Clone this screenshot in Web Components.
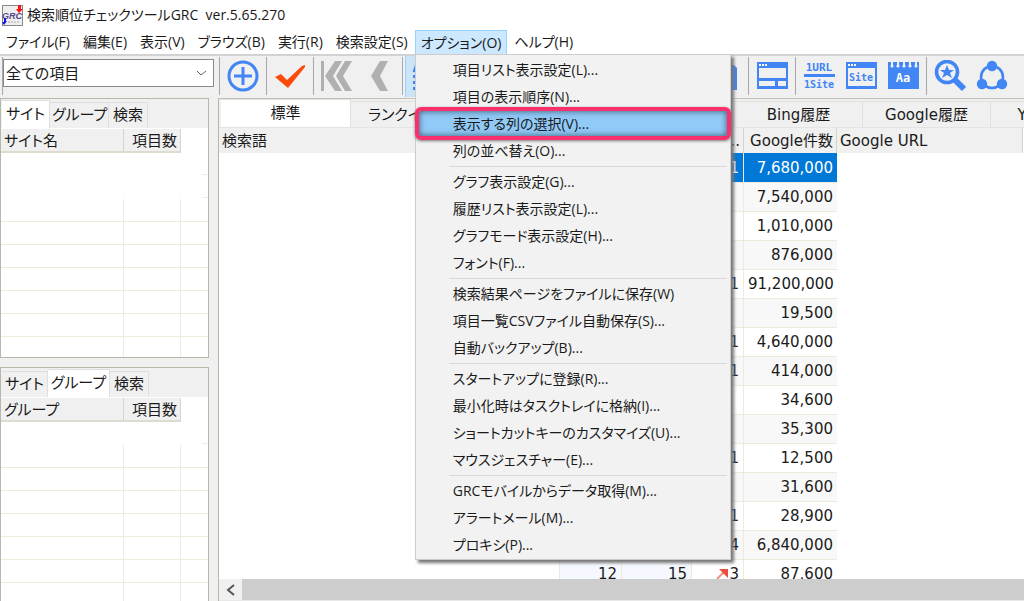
<!DOCTYPE html>
<html lang="ja">
<head>
<meta charset="utf-8">
<title>検索順位チェックツールGRC</title>
<style>
html, body { margin: 0; height: 100%; background: #fff; }
body { font-family: "Open Sans", "Noto Sans CJK JP", sans-serif; font-size: 15px; line-height: 20px; color: #1a1a1a; overflow: hidden; }
</style>
</head>
<body>
<grc-app></grc-app>
<script>
function define(name, css, render) {
  customElements.define(name, class extends HTMLElement {
    connectedCallback() {
      if (this.shadowRoot) return;
      const root = this.attachShadow({ mode: 'open' });
      root.innerHTML = '<style>*{box-sizing:border-box}button{font:inherit;color:inherit;border:0;background:none;padding:0;margin:0}' + css + '</style>' + render(this);
    }
  });
}

const ICONS = {
  add: '<g fill="none" stroke="#4285f4" stroke-width="3"><circle cx="16" cy="16" r="14"/><path stroke-width="3" d="M16 7v18M7 16h18"/></g>',
  check: '<path fill="#fc4a08" d="M1 17l6-3 6 6L28 6l3-1v2L14 28z"/>',
  first: '<g fill="#b0b0b0"><path d="M0 1h3v30H0z"/><path d="M14 1h7L12 16l9 15h-7L4 16z"/><path d="M24 1h7L22 16l9 15h-7l-9-15z"/></g>',
  prev: '<path fill="#b0b0b0" d="M17 1h8l-8 15 8 15h-8L8 16z"/>',
  list: '<path fill="none" stroke="#4285f4" stroke-width="3" d="M3 12L7 1l4 11M5 9h5"/><path fill="#4285f4" d="M2 15h26v3H2zM2 21h26v3H2zM2 27h26v3H2z"/>',
  doc: '<path fill="#4285f4" d="M2 5h23l3 3v22H2z"/>',
  layout: '<path fill="#4285f4" fill-rule="evenodd" d="M1 2h31v27H1zM3 8v10h27V8zM3 21v5h16v-5zM22 21v5h8v-5z"/><path fill="#fff" d="M3 4h2v2H3zM6 4h2v2H6zM9 4h2v2H9z"/>',
  url: '<path fill="#4285f4" d="M1 14h31v3H1z"/><g fill="#4285f4" font-family="DejaVu Sans Mono" font-weight="bold" font-size="11" text-anchor="middle"><text x="16" y="11">1URL</text><text x="16" y="28" font-size="10">1Site</text></g>',
  site: '<path fill="#4285f4" fill-rule="evenodd" d="M1 2h31v27H1zM3 8v18h27V8z"/><path fill="#fff" d="M3 4h2v2H3zM6 4h2v2H6zM9 4h2v2H9z"/><text x="16" y="21" fill="#4285f4" font-family="DejaVu Sans Mono" font-weight="bold" font-size="10" text-anchor="middle">Site</text>',
  note: '<path fill="#4285f4" d="M1 2h31v27H1z"/><g fill="#f0f0f0"><path d="M4 1h2v4H4zM10 1h2v4h-2zM16 1h2v4h-2zM22 1h2v4h-2zM28 1h2v4h-2z"/><circle cx="5" cy="6" r="1.6"/><circle cx="11" cy="6" r="1.6"/><circle cx="17" cy="6" r="1.6"/><circle cx="23" cy="6" r="1.6"/><circle cx="29" cy="6" r="1.6"/></g><text x="16" y="22" fill="#fff" font-family="DejaVu Sans Mono" font-weight="bold" font-size="12" text-anchor="middle">Aa</text>',
  search: '<circle cx="13" cy="12" r="10.5" fill="none" stroke="#4285f4" stroke-width="3.6"/><path stroke="#4285f4" stroke-width="6" d="M20 19l10 10"/><path fill="#4285f4" d="M13 5l2 5h5l-4 3 2 5-5-3-5 3 2-5-4-3h5z"/>',
  nodes: '<circle cx="16" cy="17" r="11" fill="none" stroke="#4285f4" stroke-width="2.6"/><g fill="#4285f4"><circle cx="16" cy="6" r="5.2"/><circle cx="6" cy="24" r="5.2"/><circle cx="26" cy="24" r="5.2"/></g>'
};

define('title-bar', `
:host{display:flex;align-items:center;gap:4px;height:30px;padding-left:2px;font-size:14px;flex:none;font-feature-settings:"palt"}
svg{width:21px;height:21px}`,
() => `<svg viewBox="0 0 21 21" aria-hidden="true"><rect x=".5" y=".5" width="20" height="20" fill="#eee" stroke="#888"/><text x="10" y="14" font-family="Liberation Sans" font-size="9" font-style="italic" font-weight="bold" fill="#548" text-anchor="middle">GRC</text><path fill="#f11" d="M16 0h3v4h2l-4 4-3-4h2z"/><path fill="#11e" d="M2 13h2v3h1l-3 4-2-3h2z"/><path stroke="#aaa" stroke-dasharray="2 1" d="M6 17h12"/></svg>
<span><slot></slot></span>`);

define('menu-item', `
:host{display:block}
button{display:block;width:100%;height:27px;padding-left:37px;text-align:left;white-space:nowrap}
:host([marked]) button{position:relative;background:#91c9f7}
:host([marked]) button::after{content:"";position:absolute;inset:-3px -1px;border:4px solid #f9306b;border-radius:6px;box-shadow:inset 0 0 6px #356,0 1px 3px #777}`,
() => `<button role="menuitem"><slot></slot></button>`);

define('drop-menu', `
:host{display:block;width:316px;padding:1px 0;background:#f2f2f2;border:1px solid #ccc;box-shadow:3px 3px 3px #777}
hr{border:0;height:1px;background:#d7d7d7;margin:2px 3px 1px 33px}`,
() => [
  ['項目リスト表示設定(L)...', '項目の表示順序(N)...', '*表示する列の選択(V)...', '列の並べ替え(O)...'],
  ['グラフ表示設定(G)...', '履歴リスト表示設定(L)...', 'グラフモード表示設定(H)...', 'フォント(F)...'],
  ['検索結果ページをファイルに保存(W)', '項目一覧CSVファイル自動保存(S)...', '自動バックアップ(B)...'],
  ['スタートアップに登録(R)...', '最小化時はタスクトレイに格納(I)...', 'ショートカットキーのカスタマイズ(U)...', 'マウスジェスチャー(E)...'],
  ['GRCモバイルからデータ取得(M)...', 'アラートメール(M)...', 'プロキシ(P)...']
].map(g => g.map(t => `<menu-item${t[0] === '*' ? ' marked' : ''}>${t.replace('*', '')}</menu-item>`).join('')).join('<hr>'));

define('menu-bar', `
:host{display:flex;gap:1px;height:24px;flex:none;font-size:14px;font-feature-settings:"palt"}
div{position:relative}
button{height:24px;padding:0 6px;white-space:nowrap}
.open button{background:#cce8ff;border:1px solid #99d1ff;border-bottom:0;padding:0 5px}
drop-menu{position:absolute;left:0;top:24px;z-index:5}`,
() => ['ファイル(F)', '編集(E)', '表示(V)', 'ブラウズ(B)', '実行(R)', '検索設定(S)', 'オプション(O)', 'ヘルプ(H)'].map(t =>
  t[0] === 'オ' ? `<div class="open"><button>${t}</button><drop-menu role="menu"></drop-menu></div>` : `<div><button>${t}</button></div>`).join(''));

define('tool-button', `
:host{display:block;flex:none;width:42px;height:42px}
:host([pressed]){background:#cce4f7;border-left:1px solid #99d1ff}
button{display:grid;place-items:center;width:100%;height:100%}
svg{width:32px;height:32px}`,
el => `<button aria-label="${el.getAttribute('icon')}"><svg viewBox="0 0 32 32">${ICONS[el.getAttribute('icon')]}</svg></button>`);

define('tool-bar', `
:host{display:flex;height:44px;flex:none;align-items:center;padding-bottom:2px;background:#f0f0f0;border-top:2px solid #d2d2d2;overflow:hidden;font-feature-settings:"palt"}
i{flex:none;width:5px;height:38px;background:linear-gradient(#a8a8a8,#a8a8a8) 2px 0/1px 100% no-repeat}
.box{position:relative;flex:none;width:211px;height:28px;margin:0 3px 6px 0;border:1px solid #8a8a8a;background:#fff}
select{appearance:none;width:100%;height:26px;border:0;background:none;padding:0 2px;font:inherit;color:inherit;font-feature-settings:inherit}
.box svg{position:absolute;right:6px;top:10px;pointer-events:none}
.edge{flex:none;width:1px;height:38px;margin:0 0 0 2px;background:#a8a8a8}
.space{flex:none;width:257px}`,
() => {
  const b = (n, x = '') => `<tool-button icon="${n}" ${x}></tool-button>`;
  return `<span class="edge"></span><div class="box"><select aria-label="項目"><option>全ての項目</option></select><svg width="11" height="7" fill="none" stroke="#666"><path d="M1 1l4 4 5-4"/></svg></div>
<i></i>${b('add')}<i></i>${b('check')}<i></i>${b('first')}${b('prev')}<i></i>${b('list', 'pressed')}<span class="space"></span>${b('doc')}<i></i>${b('layout')}<i></i>${b('url')}${b('site')}${b('note')}<i></i>${b('search')}${b('nodes')}`;
});

define('side-panel', `
:host{display:flex;flex-direction:column;border:1px solid #bab6a8;background:#fff;overflow:hidden;font-feature-settings:"palt"}
nav{display:flex;align-items:flex-end;flex:none;height:29px;padding:0 1px;background:#f0f0f0}
nav button{height:26px;border:1px solid #dedede;border-bottom:0;padding:0 2px 3px;white-space:nowrap;border-left:0}
nav .on{height:28px;background:#fff;padding:0 2px 4px}
.wide{width:59px}.mid{width:46px}.last{width:39px}
.mid.on{width:48px}.wide.on{width:62px}
.foot{flex:none;height:1px}
table{border-collapse:separate;border-spacing:0;table-layout:fixed;width:100%;flex:none}
th{background:#f0f0f0;height:24px;padding:0 3px;font-weight:normal;text-align:left;border-right:1px solid #d8d4c4;border-bottom:2px solid #dedbd0;line-height:20px;white-space:nowrap}
th:nth-child(2){text-align:right}
th:last-child{background:#fff;border:0}
td{height:23px;padding:0;border-right:1px solid #f0eddf;border-bottom:1px solid #f0ecdc}
td:last-child{border-right:0}
.clear td{border-color:transparent}
.clear td:last-child{background:linear-gradient(#f0ecdc,#f0ecdc) right bottom/6px 1px no-repeat}`,
el => {
  const on = el.getAttribute('active');
  const tabs = [['サイト', 'mid'], ['グループ', 'wide'], ['検索', 'last']].map(([t, c]) => `<button role="tab" class="${c}${t === on ? ' on' : ''}">${t}</button>`).join('');
  const clear = +el.getAttribute('clear');
  const rows = Array.from({ length: 10 }, (_, i) => `<tr${i < clear ? ' class="clear"' : ''}><td></td><td></td><td></td></tr>`).join('');
  return `<nav role="tablist">${tabs}</nav><span class="foot"></span><table><colgroup><col style="width:123px"><col style="width:57px"><col></colgroup><thead><tr><th>${el.getAttribute('heading')}</th><th>項目数</th><th></th></tr></thead><tbody>${rows}</tbody></table>`;
});

define('result-tabs', `
:host{display:flex;align-items:flex-end;flex:none;height:30px;padding-left:2px;background:#f0f0f0;border-top:1px solid #c4c0b4;border-bottom:1px solid #e4e4e4;overflow:hidden}
button{flex:none;width:128px;height:26px;border:1px solid #e0e0e0;border-left:0;border-bottom:0;white-space:nowrap}
.on{width:130px;height:28px;padding-bottom:1px;background:#fff}
.kana{font-feature-settings:"palt";text-align:left;padding-left:17px}`,
() => `<button class="on">標準</button><button class="kana">ランクイン</button><button></button><button></button><button>Bing履歴</button><button>Google履歴</button><button>Yahoo履歴</button>`);

define('result-grid', `
:host{display:block;flex:1;min-height:0;overflow:hidden;background:#fff}
table{border-collapse:separate;border-spacing:0;table-layout:fixed;width:804px}
th{height:25px;padding:1px 3px 0;font-weight:normal;text-align:left;background:#f0f0f0;line-height:20px;white-space:nowrap}
th.v{border-right:1px solid #d8d4c4}
.n{text-align:right}
td{height:29px;padding:0 4px;border-right:1px solid #eeeadb;border-bottom:1px solid #eeeadb;line-height:20px;text-align:right;white-space:nowrap}
td:first-child,td:last-child{background:#fff;border:0}
tr:nth-child(even) td:not(:first-child):not(:last-child){background:#f8f8f8}
.sel td:not(:first-child):not(:last-child){background:#0078d7;color:#fff}
tbody tr:last-child td:nth-child(3),tbody tr:last-child td:nth-child(4){background:#f5f9ff}
td:nth-child(6){border-right:0}
tbody tr:first-child td{height:30px}
svg{vertical-align:-1px}`,
() => {
  const data = [['1', '7,680,000'], ['', '7,540,000'], ['', '1,010,000'], ['', '876,000'], ['1', '91,200,000'], ['', '19,500'], ['1', '4,640,000'], ['1', '414,000'], ['', '34,600'], ['', '35,300'], ['1', '12,500'], ['', '31,600'], ['1', '28,900'], ['4', '6,840,000'], ['3', '87,600', '12', '15']];
  const arrow = '<svg width="13" height="12"><path d="M1 11l8-8" stroke="#f0907f" stroke-width="2"/><path fill="#e8503c" d="M3 1h9v9z"/></svg>';
  return `<table><colgroup><col style="width:197px"><col style="width:144px"><col style="width:62px"><col style="width:70px"><col style="width:52px"><col style="width:93px"><col></colgroup>
<thead><tr><th>検索語</th><th></th><th></th><th></th><th class="v n">...</th><th class="v n">Google件数</th><th class="v">Google URL</th></tr></thead><tbody>${data.map((r, i) => `<tr${i ? '' : ' class="sel"'}><td></td><td></td><td>${r[2] || ''}</td><td>${r[3] || ''}</td><td>${r[2] ? arrow : ''}${r[0]}</td><td>${r[1]}</td><td></td></tr>`).join('')}</tbody></table>`;
});

define('scroll-track', `
:host{display:flex;flex:none;height:22px;background:#cdcdcd;border-bottom:1px solid #e8e8e8}
button{display:grid;place-items:center;width:23px;background:#f0f0f0}`,
() => `<button aria-label="左へ"><svg width="10" height="12" fill="none" stroke="#555" stroke-width="2"><path d="M8 1L2 6l6 5"/></svg></button>`);

define('grc-app', `
:host{display:flex;flex-direction:column;height:100vh;overflow:hidden}
main{flex:1;min-height:0;display:grid;grid-template-columns:209px minmax(0,1fr);gap:9px;background:#f0f0f0}
aside{display:flex;flex-direction:column;gap:9px;min-height:0}
aside side-panel:first-child{flex:0 0 260px}
aside side-panel:last-child{flex:1;min-height:0;border-bottom:0}
section{display:flex;flex-direction:column;min-height:0;min-width:0;border-left:1px solid #bab6a8;font-family:"DejaVu Sans","Noto Sans CJK JP",sans-serif}`,
() => `<title-bar>検索順位チェックツールGRC&nbsp; ver.5.65.270</title-bar><menu-bar></menu-bar><tool-bar></tool-bar>
<main><aside><side-panel active="サイト" heading="サイト名" clear="2"></side-panel><side-panel active="グループ" heading="グループ" clear="1"></side-panel></aside>
<section><result-tabs></result-tabs><result-grid></result-grid><scroll-track></scroll-track></section></main>`);
</script>
</body>
</html>
